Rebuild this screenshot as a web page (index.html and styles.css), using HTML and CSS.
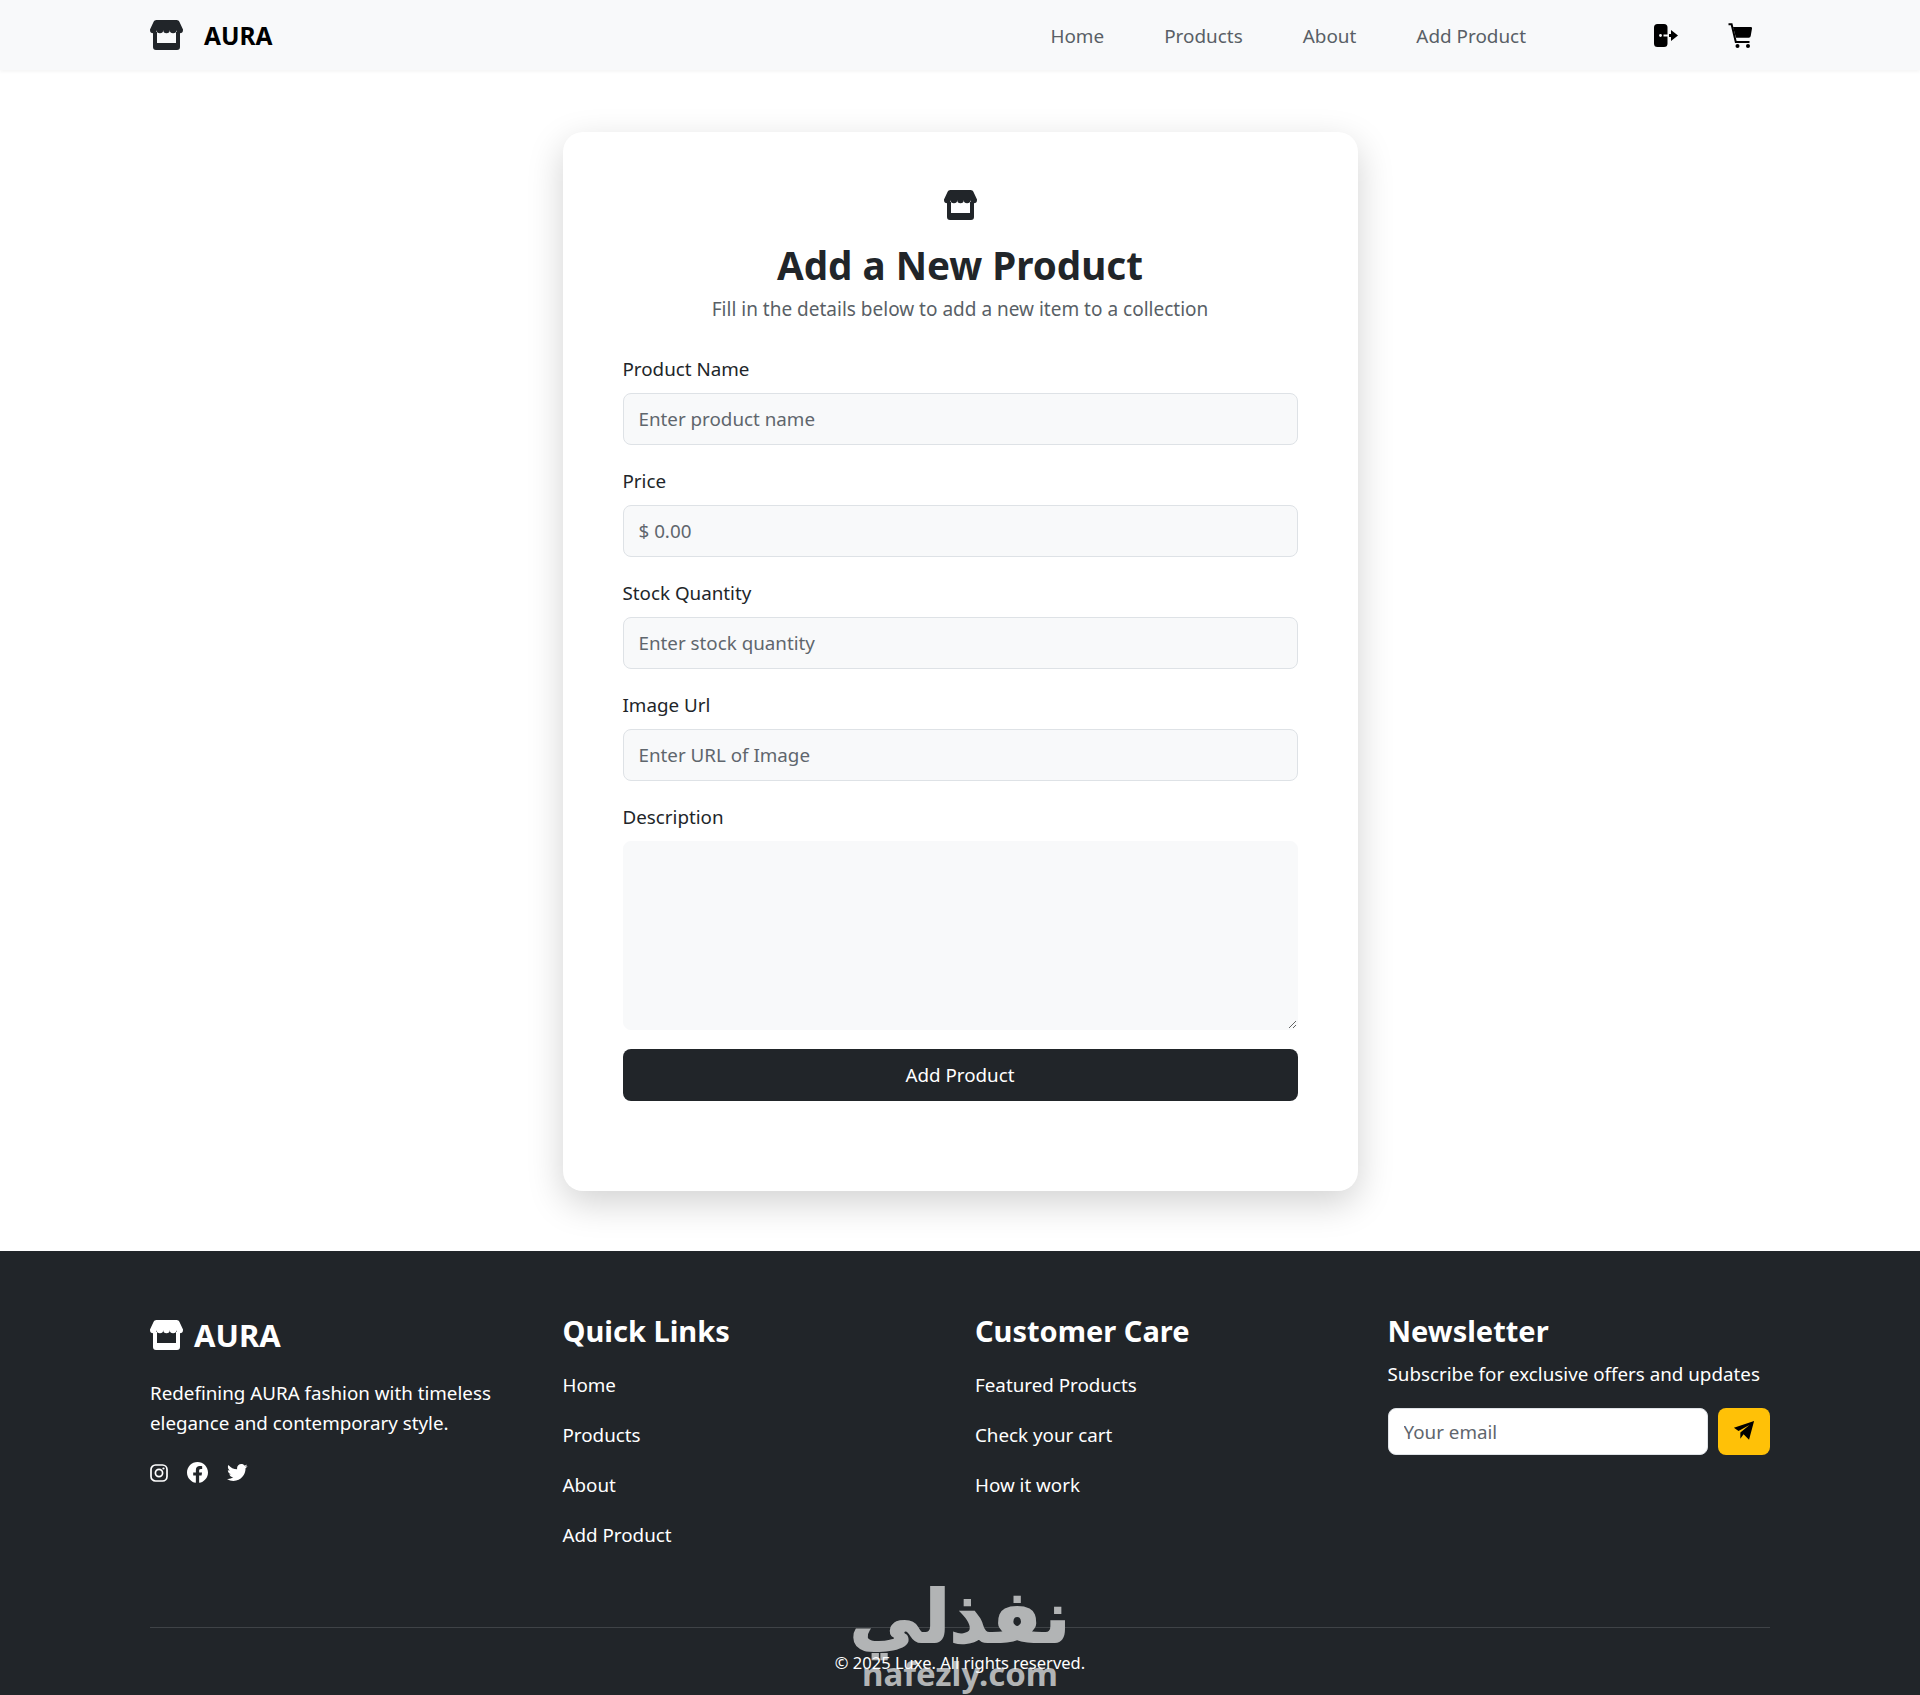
FILE: index.html
```html
<!DOCTYPE html>
<html lang="en">
<head>
    <meta charset="UTF-8">
    <title>AURA - Add Product</title>
    <link rel="stylesheet" href="styles.css">
</head>
<body>
    <nav class="navbar">
        <a class="brand" href="#">
            <svg class="store-icon" viewBox="0 0 33 30"><path d="M6.5 0H26.5C28 0 29 .8 29.5 2L33 9.5V10A3.3 3.3 0 0 1 26.4 10A3.3 3.3 0 0 1 19.8 10A3.3 3.3 0 0 1 13.2 10A3.3 3.3 0 0 1 6.6 10A3.3 3.3 0 0 1 0 10V9.5L3.5 2C4 .8 5 0 6.5 0Z"/><path fill-rule="evenodd" d="M3 12H30V27A3 3 0 0 1 27 30H6A3 3 0 0 1 3 27ZM7 12V23H26V12Z"/></svg>
            <span>AURA</span>
        </a>
        <ul class="nav-links">
            <li><a href="#">Home</a></li>
            <li><a href="#">Products</a></li>
            <li><a href="#">About</a></li>
            <li><a href="#">Add Product</a></li>
        </ul>
        <div class="nav-icons">
            <svg class="door-icon" viewBox="0 0 24 23"><path d="M3.5 0H10A3.5 3.5 0 0 1 13.500 3.500V19.500A3.500 3.500 0 0 1 10 23H3.500A3.500 3.500 0 0 1 0 19.500V3.500A3.500 3.500 0 0 1 3.500 0Z"/><circle cx="6.500" cy="11.500" r="1.400" fill="#f8f9fa"/><path d="M9.500 10.500H15V12.500H9.500Z" fill="#f8f9fa"/><path d="M15 10H17V6L24 11.500L17 17V13H15Z"/></svg>
            <svg class="cart-icon" viewBox="0 0 24 25"><path d="M5 4H22.800A1.200 1.200 0 0 1 24 5.400L22.700 13A2 2 0 0 1 20.700 14.700H8Z"/><path d="M.5 1.200H3.600L7.800 19H21.500" fill="none" stroke="#000" stroke-width="2"/><circle cx="9.500" cy="23" r="2"/><circle cx="20" cy="23" r="2"/></svg>
        </div>
    </nav>

    <main class="page">
        <section class="card">
            <header class="card-head">
                <svg class="store-icon" viewBox="0 0 33 30"><path d="M6.5 0H26.5C28 0 29 .8 29.5 2L33 9.5V10A3.3 3.3 0 0 1 26.4 10A3.3 3.3 0 0 1 19.8 10A3.3 3.3 0 0 1 13.2 10A3.3 3.3 0 0 1 6.6 10A3.3 3.3 0 0 1 0 10V9.5L3.5 2C4 .8 5 0 6.5 0Z"/><path fill-rule="evenodd" d="M3 12H30V27A3 3 0 0 1 27 30H6A3 3 0 0 1 3 27ZM7 12V23H26V12Z"/></svg>
                <h1>Add a New Product</h1>
                <p>Fill in the details below to add a new item to a collection</p>
            </header>
            <form>
                <div class="field">
                    <label for="name">Product Name</label>
                    <input type="text" id="name" placeholder="Enter product name">
                </div>
                <div class="field">
                    <label for="price">Price</label>
                    <input type="text" id="price" placeholder="$ 0.00">
                </div>
                <div class="field">
                    <label for="stock">Stock Quantity</label>
                    <input type="text" id="stock" placeholder="Enter stock quantity">
                </div>
                <div class="field">
                    <label for="image">Image Url</label>
                    <input type="text" id="image" placeholder="Enter URL of Image">
                </div>
                <div class="field field-area">
                    <label for="desc">Description</label>
                    <textarea id="desc"></textarea>
                </div>
                <button type="button" class="submit">Add Product</button>
            </form>
        </section>
    </main>

    <footer class="footer">
        <div class="footer-cols">
            <div class="footer-about">
                <div class="footer-brand">
                    <svg class="store-icon" viewBox="0 0 33 30"><path d="M6.5 0H26.5C28 0 29 .8 29.5 2L33 9.5V10A3.3 3.3 0 0 1 26.4 10A3.3 3.3 0 0 1 19.8 10A3.3 3.3 0 0 1 13.2 10A3.3 3.3 0 0 1 6.6 10A3.3 3.3 0 0 1 0 10V9.5L3.5 2C4 .8 5 0 6.5 0Z"/><path fill-rule="evenodd" d="M3 12H30V27A3 3 0 0 1 27 30H6A3 3 0 0 1 3 27ZM7 12V23H26V12Z"/></svg>
                    <span>AURA</span>
                </div>
                <p>Redefining AURA fashion with timeless elegance and contemporary style.</p>
                <div class="socials">
                    <svg class="insta" viewBox="0 0 18 18"><rect x="1" y="1" width="16" height="16" rx="4.500" fill="none" stroke="#fff" stroke-width="1.700"/><circle cx="9" cy="9" r="3.600" fill="none" stroke="#fff" stroke-width="1.700"/><circle cx="13.500" cy="4.500" r="1.100" fill="#fff"/></svg>
                    <svg viewBox="2 2 20 20"><path d="M12.001 2.002c-5.522 0-9.999 4.477-9.999 9.999 0 4.990 3.656 9.126 8.437 9.879v-6.988h-2.540v-2.891h2.540V9.798c0-2.508 1.493-3.891 3.776-3.891 1.094 0 2.240.195 2.240.195v2.459h-1.264c-1.240 0-1.628.772-1.628 1.563v1.875h2.771l-.443 2.891h-2.328v6.988C18.344 21.129 22 16.992 22 12.001c0-5.522-4.477-9.999-9.999-9.999z"/></svg>
                    <svg viewBox="2 2 20 20"><path d="M19.633 7.997c.013.175.013.349.013.523 0 5.325-4.053 11.461-11.460 11.461-2.282 0-4.402-.661-6.186-1.809.324.037.636.050.973.050a8.070 8.070 0 0 0 5.001-1.721 4.036 4.036 0 0 1-3.767-2.793c.249.037.499.062.761.062.361 0 .724-.050 1.061-.137a4.027 4.027 0 0 1-3.230-3.953v-.050c.537.299 1.160.486 1.820.511a4.022 4.022 0 0 1-1.796-3.354c0-.748.199-1.434.548-2.032a11.457 11.457 0 0 0 8.306 4.215c-.062-.300-.100-.611-.100-.923a4.026 4.026 0 0 1 4.028-4.028c1.160 0 2.207.486 2.943 1.272a7.957 7.957 0 0 0 2.556-.973 4.020 4.020 0 0 1-1.771 2.220 8.073 8.073 0 0 0 2.319-.624 8.645 8.645 0 0 1-2.019 2.083z"/></svg>
                </div>
            </div>
            <div>
                <h3>Quick Links</h3>
                <ul class="footer-links">
                    <li><a href="#">Home</a></li>
                    <li><a href="#">Products</a></li>
                    <li><a href="#">About</a></li>
                    <li><a href="#">Add Product</a></li>
                </ul>
            </div>
            <div>
                <h3>Customer Care</h3>
                <ul class="footer-links">
                    <li><a href="#">Featured Products</a></li>
                    <li><a href="#">Check your cart</a></li>
                    <li><a href="#">How it work</a></li>
                </ul>
            </div>
            <div>
                <h3>Newsletter</h3>
                <p class="news-text">Subscribe for exclusive offers and updates</p>
                <div class="news-form">
                    <input type="text" placeholder="Your email">
                    <button type="button" aria-label="Subscribe">
                        <svg viewBox="0 0 24 24"><path d="M23 1 17.500 21.500 11.500 15.500 8 20.500V13.500L18 5.500 6 12 1 8.500Z"/></svg>
                    </button>
                </div>
            </div>
        </div>
        <div class="copyright">© 2025 Luxe. All rights reserved.</div>
        <div class="watermark">
            <span class="wm-ar" lang="ar" dir="rtl">نفذلي</span>
            <span class="wm-en">nafezly.com</span>
        </div>
    </footer>
</body>
</html>
```

FILE: styles.css
```css
* {
    box-sizing: border-box;
}
body {
    margin: 0;
    font-family: "Noto Sans", "Open Sans", sans-serif;
    font-size: 18.8px;
    line-height: 1.5;
    color: #212529;
    background-color: #fff;
}
a {
    color: inherit;
    text-decoration: none;
}
ul {
    list-style: none;
    margin: 0;
    padding: 0;
}

/* navbar */
.navbar {
    display: flex;
    align-items: center;
    height: 70px;
    padding: 0 150px;
    background-color: #f8f9fa;
    box-shadow: 0 2px 3px rgba(0, 0, 0, 0.04);
}
.brand {
    display: flex;
    align-items: center;
    gap: 21px;
    font-size: 24.500px;
    font-weight: 700;
    color: #000;
}
.brand span {
    padding-top: 2px;
}
.store-icon {
    width: 33px;
    height: 30px;
    fill: #212529;
}
.nav-links {
    display: flex;
    gap: 60px;
    margin-left: auto;
    padding-top: 2px;
    font-size: 18.900px;
    color: #595f66;
}
.nav-icons {
    display: flex;
    align-items: center;
    gap: 50px;
    margin-left: 128px;
    margin-right: 18px;
}
.door-icon {
    width: 24px;
    height: 23px;
}
.cart-icon {
    width: 24px;
    height: 25px;
}

/* form card */
.page {
    display: flex;
    justify-content: center;
    padding: 62px 0 60px;
}
.card {
    width: 795px;
    height: 1059px;
    padding: 58px 60px 0;
    background-color: #fff;
    border-radius: 20px;
    box-shadow: 0 12px 36px rgba(0, 0, 0, 0.18);
}
.card-head {
    margin-bottom: 31px;
    text-align: center;
}
.card-head .store-icon {
    display: block;
    margin: 0 auto 22px;
}
.card-head h1 {
    margin: 0 0 7px;
    font-size: 38.600px;
    line-height: 1.2;
    font-weight: 700;
}
.card-head p {
    margin: 0;
    font-size: 19px;
    color: #595f66;
}
.field {
    margin-bottom: 22px;
}
.field label {
    display: block;
    height: 29px;
    margin-bottom: 9px;
}
.field input,
.field textarea {
    display: block;
    width: 100%;
    padding: 0 15px;
    font: inherit;
    color: #212529;
    background-color: #f8f9fa;
    border: 1px solid #dee2e6;
    border-radius: 8px;
    outline: none;
}
.field input {
    height: 52px;
}
.field textarea {
    height: 189px;
    border-color: #f8f9fa;
    resize: vertical;
}
.field input::placeholder,
.news-form input::placeholder {
    color: #5f666d;
    opacity: 1;
}
.field-area {
    margin-bottom: 19px;
}
.submit {
    display: block;
    width: 100%;
    height: 52px;
    font: inherit;
    color: #fff;
    background-color: #212529;
    border: 0;
    border-radius: 8px;
}

/* footer */
.footer {
    position: relative;
    height: 444px;
    padding: 63px 150px 0;
    color: #fff;
    background-color: #212529;
    overflow: hidden;
}
.footer-cols {
    display: grid;
    grid-template-columns: repeat(4, 1fr);
    gap: 30px;
    height: 314px;
    border-bottom: 1px solid #3f4347;
}
.footer-brand {
    display: flex;
    align-items: center;
    gap: 11px;
    margin-top: 1px;
    margin-bottom: 23px;
    font-size: 31px;
    font-weight: 700;
    line-height: 1.3;
}
.footer-brand .store-icon {
    fill: #fff;
}
.footer-about p {
    margin: 0 0 24px;
    line-height: 30px;
}
.socials {
    display: flex;
    align-items: center;
    gap: 19px;
}
.socials svg {
    width: 21px;
    height: 21px;
    fill: #fff;
}
.socials .insta {
    width: 18px;
    height: 18px;
}
.footer h3 {
    margin: 0 0 11px;
    font-size: 29px;
    line-height: 1.2;
    font-weight: 700;
}
.footer-links {
    margin-top: 22px;
}
.footer-links li {
    height: 50px;
    line-height: 28px;
}
.news-text {
    margin: 0 0 20px;
}
.news-form {
    display: flex;
    gap: 10px;
}
.news-form input {
    flex: 1;
    min-width: 0;
    height: 47px;
    padding: 2px 15px 0;
    font: inherit;
    background-color: #fff;
    border: 1px solid #dee2e6;
    border-radius: 8px;
}
.news-form button {
    display: flex;
    align-items: center;
    justify-content: center;
    width: 52px;
    height: 47px;
    padding: 0;
    background-color: #ffc107;
    border: 0;
    border-radius: 8px;
}
.news-form svg {
    width: 22px;
    height: 22px;
}
.copyright {
    position: relative;
    z-index: 1;
    margin-top: 23px;
    text-align: center;
    font-size: 16.500px;
}

/* site watermark sitting over the footer */
.watermark {
    position: absolute;
    left: 0;
    right: 0;
    bottom: 5px;
    display: flex;
    flex-direction: column;
    align-items: center;
    color: #b2b4b5;
    pointer-events: none;
}
.wm-ar {
    margin-bottom: 4px;
    font-family: "DejaVu Sans", sans-serif;
    font-size: 72px;
    font-weight: 700;
    line-height: 72px;
    -webkit-text-stroke: 2px #b2b4b5;
}
.wm-en {
    font-family: "Noto Sans", sans-serif;
    font-size: 33px;
    font-weight: 700;
    line-height: 33px;
}
```
